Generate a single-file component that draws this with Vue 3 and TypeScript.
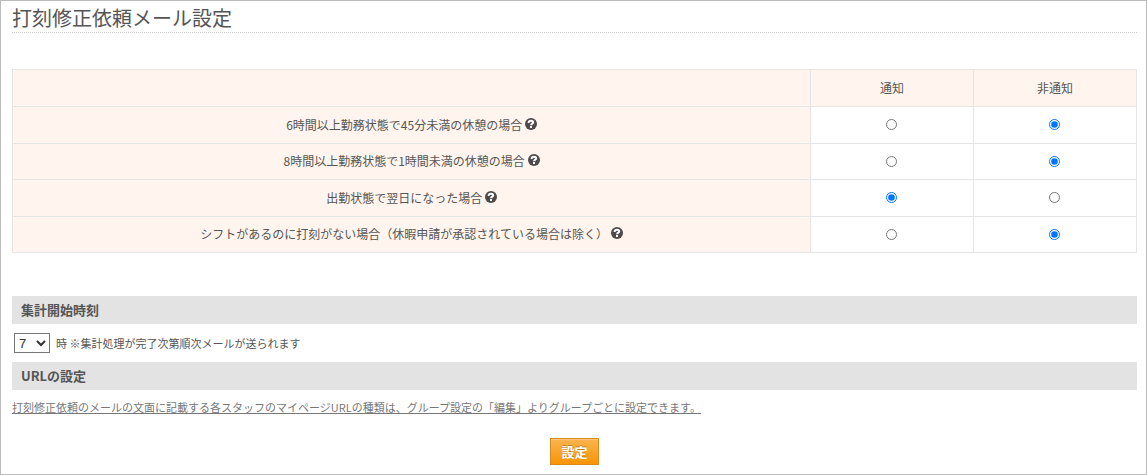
<script setup lang="ts">
import { ref } from 'vue'

interface Rule {
  id: string
  label: string
  notify: 'on' | 'off'
}

const rules = ref<Rule[]>([
  { id: 'break45', label: '6時間以上勤務状態で45分未満の休憩の場合', notify: 'off' },
  { id: 'break60', label: '8時間以上勤務状態で1時間未満の休憩の場合', notify: 'off' },
  { id: 'nextday', label: '出勤状態で翌日になった場合', notify: 'on' },
  { id: 'nopunch', label: 'シフトがあるのに打刻がない場合（休暇申請が承認されている場合は除く）', notify: 'off' },
])

const hours = Array.from({ length: 24 }, (_, i) => i)
const startHour = ref(7)
</script>

<template>
  <main class="page">
    <h1 class="title">打刻修正依頼メール設定</h1>

    <form @submit.prevent>
      <table class="rules">
        <colgroup>
          <col class="col-label" />
          <col class="col-choice" />
          <col class="col-choice" />
        </colgroup>
        <thead>
          <tr>
            <th></th>
            <th id="head-on" scope="col">通知</th>
            <th id="head-off" scope="col">非通知</th>
          </tr>
        </thead>
        <tbody>
          <tr v-for="rule in rules" :key="rule.id">
            <th :id="rule.id" scope="row">
              {{ rule.label }}
              <svg class="help" viewBox="0 0 12 12" aria-hidden="true">
                <circle cx="6" cy="6" r="6" fill="#4f4a49" />
                <path d="M3.6 4.9C3.6 3.3 4.6 2.8 6 2.8S8.2 3.4 8.2 4.5C8.2 5.7 6.1 5.5 6.1 7.2" fill="none" stroke="#fff" stroke-width="2" />
                <rect x="5" y="8" width="2" height="2" fill="#fff" />
              </svg>
            </th>
            <td>
              <input v-model="rule.notify" type="radio" :name="rule.id" value="on" :aria-labelledby="`${rule.id} head-on`" />
            </td>
            <td>
              <input v-model="rule.notify" type="radio" :name="rule.id" value="off" :aria-labelledby="`${rule.id} head-off`" />
            </td>
          </tr>
        </tbody>
      </table>

      <h2 class="section">集計開始時刻</h2>
      <div class="start">
        <select id="start-hour" v-model="startHour">
          <option v-for="h in hours" :key="h" :value="h">{{ h }}</option>
        </select>
        <label for="start-hour">時 ※集計処理が完了次第順次メールが送られます</label>
      </div>

      <h2 class="section">URLの設定</h2>
      <p class="url">
        <a href="#">打刻修正依頼のメールの文面に記載する各スタッフのマイページURLの種類は、グループ設定の「編集」よりグループごとに設定できます。</a>
      </p>

      <div class="actions">
        <button type="submit">設定</button>
      </div>
    </form>
  </main>
</template>

<style>
body {
  background: #fff;
}
</style>

<style scoped>
.page {
  box-sizing: border-box;
  min-height: 100vh;
  padding: 4px 9px 8px 11px;
  border: 1px solid #bbb;
  color: #555;
  font-family: "Noto Sans CJK JP", "Noto Sans", sans-serif;
  font-size: 12px;
  line-height: 18px;
}

.title {
  margin: 0 0 36px;
  padding-bottom: 2px;
  border-bottom: 1px dotted #ccc;
  font-size: 20px;
  font-weight: 400;
  line-height: 25px;
}

.rules {
  width: 100%;
  height: 184px;
  border-collapse: collapse;
  table-layout: fixed;
}

.rules thead tr {
  height: 37px;
}

.rules tbody tr {
  height: 36px;
}

.col-label {
  width: 71%;
}

.rules th,
.rules td {
  padding: 0;
  border: 1px solid #e5e5e5;
  font-weight: 400;
  text-align: center;
  vertical-align: middle;
}

.rules td {
  padding-right: 1px;
}

.rules th {
  background: #fff5ee;
}

.rules input {
  display: block;
  width: 11px;
  height: 11px;
  margin: 0 auto;
}

.help {
  width: 12px;
  height: 12px;
  vertical-align: 0;
}

.section {
  margin: 0;
  padding: 0 9px;
  background: #e3e3e3;
  font-size: 13px;
  font-weight: 700;
  line-height: 28px;
}

.rules + .section {
  margin-top: 43px;
}

.start {
  display: flex;
  align-items: center;
  gap: 6px;
  height: 38px;
  padding-left: 2px;
  font-size: 11px;
}

.start select {
  box-sizing: border-box;
  width: 36px;
  height: 20px;
  padding: 0;
  border: 1px solid #767676;
  border-radius: 0;
  background: #fff;
  color: #333;
  font-family: "Liberation Sans", Arial, sans-serif;
  font-size: 13px;
}

.url {
  margin: 8px 0 22px;
  font-size: 11px;
}

.url a {
  color: #777;
  text-decoration: underline;
}

.actions {
  text-align: center;
}

.actions button {
  box-sizing: border-box;
  height: 27px;
  padding: 0 10px;
  border: 1px solid #d98a1e;
  background: linear-gradient(#fbb450, #f89406);
  box-shadow: inset 0 1px 0 #fcc578;
  color: #fff;
  font-family: inherit;
  font-size: 13px;
  font-weight: 700;
  line-height: 25px;
  text-shadow: 0 -1px 0 rgba(0, 0, 0, 0.25);
  vertical-align: top;
}
</style>
